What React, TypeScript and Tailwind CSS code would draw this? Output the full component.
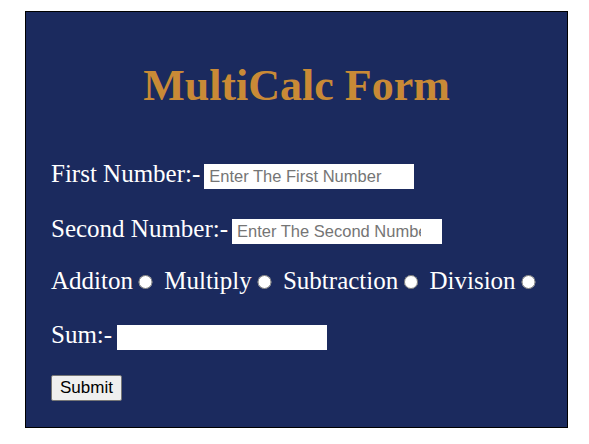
import React from 'react';

const inputCls =
  "bg-white w-[210px] h-[25px] pl-[5px] pr-[6px] text-[16.5px] text-black placeholder:text-[#757575] outline-none";
const radioCls = "mt-[3px] mr-[5px] ml-[5.5px] w-[14.5px] h-[14.5px]";

const App: React.FC = () => {
  return (
    <div className="min-h-[444px] bg-white pt-[11px] pl-[25px]">
      <div
        className="w-[543px] h-[417px] border border-black bg-[#1b2a5e] text-white pl-[25px]"
        style={{ fontFamily: '"Liberation Serif", "Times New Roman", serif' }}
      >
        <h1 className="mt-[49px] pr-[25px] text-center text-[44px] leading-[50px] font-bold text-[#c98a36]">
          MultiCalc Form
        </h1>

        <div className="mt-[48px] flex items-baseline text-[25px] leading-[29px]">
          <span>First Number:-</span>
          <input
            type="number"
            placeholder="Enter The First Number"
            className={inputCls + " ml-[4px]"}
            style={{ fontFamily: '"Liberation Sans", Arial, sans-serif' }}
          />
        </div>

        <div className="mt-[25px] flex items-baseline text-[25px] leading-[29px]">
          <span>Second Number:-</span>
          <input
            type="number"
            placeholder="Enter The Second Number"
            className={inputCls + " ml-[4px]"}
            style={{ fontFamily: '"Liberation Sans", Arial, sans-serif' }}
          />
        </div>

        <div className="mt-[22px] text-[25px] leading-[29px]">
          Additon<input type="radio" name="op" className={radioCls} />{' '}
          Multiply<input type="radio" name="op" className={radioCls} />{' '}
          Subtraction<input type="radio" name="op" className={radioCls} />{' '}
          Division<input type="radio" name="op" className={radioCls} />
        </div>

        <div className="mt-[25px] flex items-baseline text-[25px] leading-[29px]">
          <span>Sum:-</span>
          <input
            type="number"
            className={inputCls + " ml-[5px] h-[24px]"}
            style={{ fontFamily: '"Liberation Sans", Arial, sans-serif' }}
          />
        </div>

        <button
          className="mt-[25px] h-[26px] px-[8px] bg-[#efefef] border border-[#767676] rounded-[2px] text-black text-[17px] leading-[20px]"
          style={{ fontFamily: '"Liberation Sans", Arial, sans-serif' }}
        >
          Submit
        </button>
      </div>
    </div>
  );
};

export default App;
